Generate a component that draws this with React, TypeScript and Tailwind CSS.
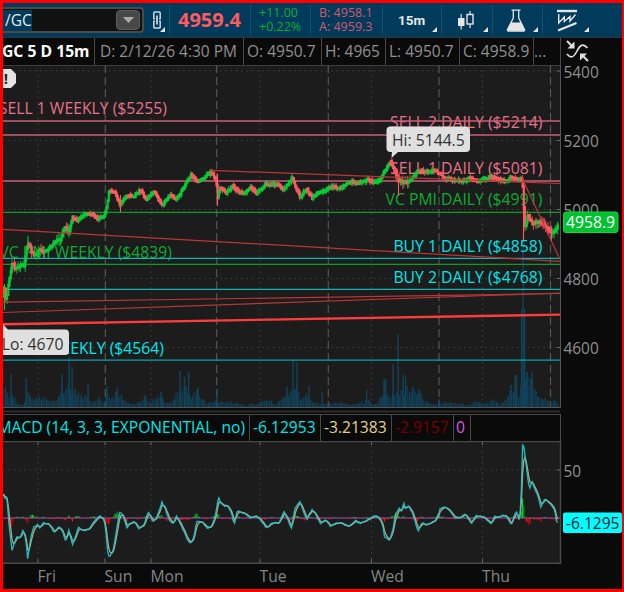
import type { ReactNode } from "react";

type Point = [number, number];

const PRICE: Point[] = [
  [3, 293], [4.5, 287], [6, 300], [8, 288], [10, 275], [12, 263], [15, 268], [20, 265], [24, 266], [27, 247],
  [29, 244], [32, 253], [35, 255], [40, 250], [45, 252], [50, 248], [55, 242], [60, 240], [63, 230], [66, 227],
  [69, 233], [72, 217], [77, 221], [82, 217], [87, 214], [93, 215], [99, 219], [104, 216], [107, 205], [109, 190],
  [115, 192], [120, 205], [123, 201], [127, 195], [133, 197], [140, 190], [146, 199], [154, 192], [162, 205], [170, 196],
  [177, 199], [183, 188], [191, 175], [198, 182], [203, 178], [211, 172], [215, 178], [216.5, 184], [217.5, 198], [220, 187],
  [226, 193], [233, 186], [240, 193], [246, 192], [251, 188], [257, 193], [262, 188], [266, 184], [280, 185], [283, 190],
  [287, 185], [292, 178], [297, 190], [300, 197], [307, 189], [312, 198], [318, 193], [325, 191], [330, 187], [337, 188],
  [343, 187], [350, 182], [360, 183], [367, 180], [373, 182], [380, 180], [385, 170], [391, 161], [395, 173], [400, 181],
  [408, 183], [413, 178], [419, 170], [424, 172], [434, 171], [440, 173], [444, 178], [454, 180], [464, 181], [471, 178],
  [477, 181], [491, 177], [501, 180], [507, 181], [511, 177], [517, 180], [522, 178], [523.5, 203], [525, 227], [528, 215],
  [532, 223], [541, 222], [546, 228], [551, 232], [554, 232], [559, 223],
];

const VOLUME: Point[] = [
  [3, 20], [5, 20], [9, 12], [14, 11], [18, 3], [23, 3], [27, 20], [31, 11], [36, 9], [40, 12], [46, 8], [52, 6], [57, 7], [60, 17],
  [64, 20], [67, 22], [72, 21], [77, 15], [84, 12], [92, 6], [98, 11], [104, 4], [106, 20], [110, 11], [114, 17], [119, 15],
  [124, 7], [133, 3], [140, 7], [145, 9], [150, 6], [161, 12], [166, 4], [172, 7], [177, 15], [182, 21], [187, 20], [191, 13],
  [197, 17], [202, 8], [208, 4], [214, 8], [220, 5], [228, 6], [235, 5], [247, 1], [251, 5], [255, 2], [262, 8], [269, 8],
  [274, 3], [280, 7], [285, 14], [290, 18], [296, 22], [300, 10], [306, 14], [312, 6], [319, 3], [330, 4], [340, 5], [350, 3],
  [358, 5], [364, 5], [367, 12], [371, 3], [377, 5], [382, 13], [387, 12], [393, 15], [401, 18], [406, 20], [413, 16], [420, 15],
  [424, 6], [434, 3], [446, 5], [460, 4], [468, 2], [476, 7], [484, 4], [494, 8], [498, 3], [505, 9], [510, 18], [514, 20],
  [519, 12], [523, 40], [527, 32], [532, 26], [537, 11], [543, 9], [550, 5], [554, 7], [558, 3],
];

const SPIKES: Point[] = [
  [11, 33], [26, 29], [62, 33], [69, 50], [72, 40], [88, 23], [107, 21], [117, 19], [145, 12], [161, 15], [180, 36],
  [184.5, 30], [188.5, 35], [198, 19], [217, 18], [287, 20], [293, 46], [297, 44], [309, 21], [322, 15], [366.5, 17],
  [384, 28], [385.5, 28], [393, 43], [398, 73], [403, 32], [405.5, 30], [412.5, 20], [419, 18], [439, 8], [511, 22],
  [515, 32], [516.5, 32], [521.5, 98], [523, 170], [524.5, 98], [527, 35], [532, 35],
];

const MACD: Point[] = [
  [3, 483], [4, 505], [5, 495], [7.3, 500], [9.3, 527], [12, 550.5], [16.7, 537], [20.7, 536.5], [23.3, 530], [26, 540],
  [27.7, 559], [30.7, 538], [33.3, 528], [37.7, 524], [40, 528], [43.3, 523], [50, 525], [54, 532.5], [59.3, 527],
  [62.7, 532], [65.7, 542], [68.7, 530], [72.7, 545], [78.3, 527.5], [83.3, 530.5], [89.3, 529], [95, 520], [100, 516],
  [104, 520], [106, 530], [107.3, 550], [109.3, 557.5], [113.3, 550], [116.7, 530], [119.3, 512.5], [122.7, 514],
  [126.7, 527.5], [130, 523.5], [135, 521.5], [139, 529], [144, 525], [148.3, 511], [152.7, 521.5], [156.7, 518],
  [162, 502], [165, 508], [169.3, 520.5], [173.3, 523], [176.7, 516], [181.7, 526.5], [186.7, 538], [190.7, 544],
  [194, 536.5], [196.7, 521.5], [201.7, 521.5], [207.3, 528.5], [211.7, 526.5], [215, 517], [216.7, 508], [218.3, 497],
  [220, 501.5], [224, 506], [228.3, 506.5], [231.7, 513], [234.3, 524.5], [237.3, 511], [243.3, 513], [247.3, 515],
  [250.7, 518], [256.7, 516], [261.7, 521.5], [266.7, 528], [271.7, 523], [279.3, 522.5], [284, 511.5], [287.3, 518],
  [291.3, 529], [295, 508], [300, 502], [304, 513], [306.7, 520], [312, 509], [316, 515], [320.3, 523.5], [325.3, 520],
  [330.3, 526], [337, 522.5], [342, 523.5], [349.3, 526.5], [355.3, 520.5], [360.3, 523.5], [367, 520], [373.7, 516],
  [378.7, 517], [382.7, 525], [384.7, 537], [389.3, 540.5], [392.7, 531], [395.3, 515], [399.3, 508], [402, 511],
  [403.7, 502], [405.3, 508.5], [408.7, 506.5], [412.7, 513], [418, 532], [422, 522.5], [427, 525], [436, 520],
  [440.3, 509], [444.7, 506.5], [449.3, 510], [454.7, 518], [460.3, 517.5], [465.3, 514], [471.3, 523.5], [476, 515.5],
  [483.7, 517], [491.3, 523.5], [494.7, 516.5], [500.3, 516.5], [506, 515], [511.3, 524.5], [516, 511], [519.3, 520],
  [521, 505], [522.4, 446], [523.6, 445], [526, 463], [529.3, 489], [532, 481.5], [535.3, 490], [538.7, 498], [540.7, 507.5],
  [544.7, 499], [549.3, 503], [554.7, 509], [556.3, 520], [558.3, 523],
];

const STEP = 1.21;
const COUNT = 459;

function valueAt(points: Point[], x: number) {
  for (let i = 1; i < points.length; i++) {
    const [x1, y1] = points[i];
    if (x <= x1) {
      const [x0, y0] = points[i - 1];
      return y0 + ((x - x0) / (x1 - x0)) * (y1 - y0);
    }
  }
  return points[points.length - 1][1];
}

// repeatable jitter in 0..1
function jitter(n: number) {
  const v = Math.sin(n * 127.1 + 11.7) * 43758.5453;
  return v - Math.floor(v);
}

const xs = Array.from({ length: COUNT }, (_, i) => 3.5 + i * STEP);

const candles = xs.map((x, i) => {
  const drift = valueAt(PRICE, x + 1.5) - valueAt(PRICE, x - 1.5);
  const open = valueAt(PRICE, x - STEP) + (jitter(i) - 0.5) * 2.6;
  const close = valueAt(PRICE, x) + (jitter(i + 1) - 0.5) * 2.6;
  const wild = x < 75 ? 6 : x > 395 && x < 412 ? 6 : x > 522 ? 6 : 3.2;
  return {
    x,
    up: Math.abs(drift) > 0.8 ? drift < 0 : close <= open,
    top: Math.min(open, close),
    bottom: Math.max(open, close),
    high: Math.min(open, close) - jitter(i + 300) * wild,
    low: Math.max(open, close) + jitter(i + 700) * wild,
  };
});

const volumeBars = xs.map((x, i) => valueAt(VOLUME, x) * (0.6 + jitter(i + 50) * 0.5));

const macdValues = xs.map((x, i) => valueAt(MACD, x) + (jitter(i + 90) - 0.5) * 1.2);

const signalValues: number[] = [];
macdValues.forEach((v, i) => {
  const prev = i ? signalValues[i - 1] : v;
  signalValues.push(prev + (v - prev) * 0.5);
});

const toPath = (ys: number[]) =>
  ys.map((y, i) => `${i ? "L" : "M"}${xs[i].toFixed(1)} ${y.toFixed(1)}`).join("");

const LEVELS = [
  { y: 121, color: "#c95f78" },
  { y: 135, color: "#c95f78" },
  { y: 181, color: "#c95f78" },
  { y: 212.3, color: "#0c9a2c" },
  { y: 264.3, color: "#0c9a2c" },
  { y: 258.3, color: "#08b4b8" },
  { y: 289.3, color: "#08b4b8" },
  { y: 360.2, color: "#08a5a8" },
];

const LEVEL_LABELS = [
  { text: "SELL 1 WEEKLY ($5255)", x: 167, y: 114.3, color: "#e8718b" },
  { text: "VC PMI WEEKLY ($4839)", x: 172, y: 257.7, color: "#0cab30" },
  { text: "BUY 1 WEEKLY ($4564)", x: 164, y: 353.7, color: "#00e5e8" },
  { text: "SELL 2 DAILY ($5214)", x: 542.3, y: 128.4, color: "#e8718b" },
  { text: "SELL 1 DAILY ($5081)", x: 542.3, y: 174.4, color: "#e8718b" },
  { text: "VC PMI DAILY ($4991)", x: 542.3, y: 205.4, color: "#0cab30" },
  { text: "BUY 1 DAILY ($4858)", x: 542.3, y: 251.5, color: "#00e5e8" },
  { text: "BUY 2 DAILY ($4768)", x: 542.3, y: 282.5, color: "#00e5e8" },
];

const PRICE_TICKS = [
  { label: "5400", y: 71 },
  { label: "5200", y: 140.5 },
  { label: "5000", y: 209.5 },
  { label: "4800", y: 278.5 },
  { label: "4600", y: 347.5 },
];

const DAYS = [
  { label: "Fri", x: 38 },
  { label: "Sun", x: 105 },
  { label: "Mon", x: 151 },
  { label: "Tue", x: 260 },
  { label: "Wed", x: 371.5 },
  { label: "Thu", x: 482.5 },
];

const SESSION_BREAKS = [105.3, 216.7, 328.3, 439, 550.5];

function Corner() {
  return (
    <svg className="absolute right-1 bottom-[5px] h-[5px] w-[5px]" viewBox="0 0 5 5">
      <path d="M5 0V5H0Z" fill="#e6e6e6" />
    </svg>
  );
}

function ToolButton({ className, children }: { className: string; children: ReactNode }) {
  return (
    <div className={`relative flex h-full shrink-0 items-center ${className}`}>
      {children}
      <Corner />
    </div>
  );
}

function Divider() {
  return <div className="h-[30px] w-px shrink-0 bg-[#17506f]" />;
}

function Toolbar() {
  return (
    <div className="flex h-[34px] items-center bg-[#003b5c]">
      <div className="flex h-[26px] w-[141px] shrink-0 items-center justify-between rounded-r-sm border-y-2 border-r-2 border-[#4a4a4a] bg-[#111] pr-0.5">
        <span className="h-[21px] bg-[#003b5c] pl-0.5 text-[15.5px] leading-[21px] text-[#e8e8e8]">/GC</span>
        <div className="flex h-5 w-6 items-center justify-center rounded-sm border border-[#5c5c5c] bg-[#484848]">
          <svg className="h-[6px] w-[11px]" viewBox="0 0 11 6">
            <path d="M0 0H11L5.5 6Z" fill="#aaa" />
          </svg>
        </div>
      </div>

      <ToolButton className="w-[25px] pl-2">
        <svg className="h-[18px] w-[10px]" viewBox="0 0 10 18" fill="none" stroke="#ccd6dc" strokeWidth="1.5">
          <path d="M3 7.700H1.800V1.800Q1.800 1 2.600 1H7.400Q8.200 1 8.200 1.800V7.700H7" />
          <path d="M3 10.300H1.800V16.200Q1.800 17 2.600 17H7.400Q8.200 17 8.200 16.200V10.300H7" />
          <path d="M5 4.500V13.500" strokeWidth="1.800" />
        </svg>
      </ToolButton>
      <Divider />

      <div className="w-[80px] shrink-0 pl-2 text-[20px] font-bold text-[#ff5a60]">4959.4</div>
      <Divider />
      <div className="w-[59px] shrink-0 pl-2 text-[12.5px] leading-[14px] text-[#0cab30]">
        <div>+11.00</div>
        <div>+0.22%</div>
      </div>
      <Divider />
      <div className="w-[71px] shrink-0 pl-2 text-[12.5px] leading-[14px] whitespace-nowrap text-[#d9566a]">
        <div>B: 4958.1</div>
        <div>A: 4959.3</div>
      </div>
      <Divider />

      <ToolButton className="w-[58px] pl-[15px]">
        <span className="font-[Roboto,sans-serif] text-[13.5px] font-bold text-[#e6e6e6]">15m</span>
      </ToolButton>
      <Divider />
      <ToolButton className="w-[50px] pl-[15px]">
        <svg className="h-5 w-[18px]" viewBox="0 0 18 20">
          <path d="M4.2 4V19.500M13 1V18" stroke="#e6e6e6" strokeWidth="1.2" />
          <rect x="1" y="8" width="6.5" height="8" fill="#e6e6e6" />
          <rect x="10" y="4.500" width="6" height="9.5" fill="#003b5c" stroke="#e6e6e6" strokeWidth="1.4" />
        </svg>
      </ToolButton>
      <Divider />
      <ToolButton className="w-[49px] pl-[13px]">
        <svg className="h-[23px] w-[20px]" viewBox="0 0 20 23" fill="none" stroke="#e6e6e6" strokeWidth="1.3">
          <path d="M5.500 1.200H14.500M7.300 1V9L1.500 20.500Q1 22 2.500 22H17.500Q19 22 18.500 20.500L12.700 9V1" />
          <path d="M5.3 13.500H14.700L19 21.800H1Z" fill="#e6e6e6" stroke="none" />
        </svg>
      </ToolButton>
      <Divider />
      <ToolButton className="w-[50px] pl-[14px]">
        <svg className="h-[23px] w-[20px]" viewBox="0 0 20 23" fill="none" stroke="#e6e6e6">
          <path d="M0 2H20" strokeWidth="2.400" />
          <path d="M1.700 5V14L7.300 8V12.500L13 7.500V12L18.500 5.500" strokeWidth="1.400" />
          <path d="M1 21.500L19.500 14" strokeWidth="2.200" />
        </svg>
      </ToolButton>
    </div>
  );
}

function Cell({ className, children }: { className: string; children?: ReactNode }) {
  return (
    <div className={`flex h-full shrink-0 items-center overflow-hidden border-r border-[#484848] whitespace-nowrap ${className}`}>
      {children}
    </div>
  );
}

function QuoteRow() {
  return (
    <div className="flex h-[28px] border-t border-[#333] bg-[#0a0a0a] text-[15.5px] text-[#909090]">
      <Cell className="w-[92px] text-[15.7px] font-bold text-white">
        <span className="-ml-px">GC 5 D 15m</span>
      </Cell>
      <Cell className="w-[149px] pl-[5px]">D: 2/12/26 4:30 PM</Cell>
      <Cell className="w-[78px] pl-[3px]">O: 4950.7</Cell>
      <Cell className="w-[64px] pl-[3px]">H: 4965</Cell>
      <Cell className="w-[74px] pl-[3px]">L: 4950.7</Cell>
      <Cell className="w-[74px] pl-[3px]">C: 4958.9</Cell>
      <Cell className="w-[27px]">...</Cell>
      <svg className="mt-0.5 ml-[5px] h-[22px] w-[23px]" viewBox="0 0 23 22" fill="none" stroke="#e0e0e0">
        <path d="M1 14C5 19 8 17 11 11S17 3 21.500 8" strokeWidth="1.600" />
        <path d="M1 1L6 6" strokeWidth="2" />
        <path d="M8.500 1.500V8.500H1.500Z" fill="#e0e0e0" stroke="none" />
        <path d="M22 21L17 16" strokeWidth="2" />
        <path d="M14 13.500H21L14 20.500Z" fill="#e0e0e0" stroke="none" />
      </svg>
    </div>
  );
}

function PriceChart() {
  return (
    <svg className="block h-[349px] w-[619px]" viewBox="3 65 619 349">
      <rect x="3" y="65" width="619" height="349" fill="#0a0a0a" />
      <rect x="3" y="65" width="557" height="342" fill="#1c1c1c" />

      <g stroke="#454545" fill="none">
        {PRICE_TICKS.map((t) => (
          <path key={t.label} d={`M3 ${t.y}H560`} strokeDasharray="1.300 4" />
        ))}
        {DAYS.filter((d) => d.label !== "Sun").map((d) => (
          <path key={d.label} d={`M${d.x} 65V407`} strokeDasharray="1.300 4" />
        ))}
        {SESSION_BREAKS.map((x) => (
          <path key={x} d={`M${x} 65V407`} stroke="#555" strokeWidth="1.200" strokeDasharray="8 4" />
        ))}
      </g>

      <g fill="#104b68" opacity="0.85">
        {volumeBars.map((h, i) => (
          <rect key={i} x={xs[i]} y={407 - h} width={i % 2 ? 1.1 : 0.7} height={h} />
        ))}
        {SPIKES.map(([x, h]) => (
          <rect key={x} x={x - 0.6} y={407 - h} width="1.400" height={h} />
        ))}
      </g>

      {LEVEL_LABELS.map((l) => (
        <text key={l.text} x={l.x} y={l.y} fill={l.color} fontSize="15.75" textAnchor="end">
          {l.text}
        </text>
      ))}

      {LEVELS.map((l) => (
        <path key={l.y} d={`M3 ${l.y}H560`} stroke={l.color} strokeWidth="1.300" />
      ))}

      {candles.map((c) => (
        <g key={c.x} fill={c.up ? "#0acb36" : "#ff5a60"}>
          <rect x={c.x - 0.5} y={c.high - 0.5} width="1" height={c.low - c.high + 1} opacity="0.850" />
          <rect x={c.x - 1.1} y={c.top - 1.5} width="2.200" height={c.bottom - c.top + 3} />
        </g>
      ))}
      <g strokeWidth="1.100">
        <path d="M28 236V250M4.500 284V310M292 173V182" stroke="#0acb36" />
        <path d="M217.500 174V206M398.500 175V196M523.500 180V240M551.500 228V241M120.500 195V212" stroke="#ff5a60" />
      </g>

      <g stroke="#b93737" strokeWidth="1.200" fill="none">
        <path d="M3 229.300L560 261.300" />
        <path d="M210 170.300L560 183.500" />
        <path d="M522 178L560 259.500" />
        <path d="M3 302.200L560 293.500" />
        <path d="M3 312.500L560 293" />
      </g>
      <path d="M3 324.200L560 314.600" stroke="#ff3c3c" strokeWidth="2.400" />

      <path d="M3 69H11L16 74V83L11 88H3Z" fill="#e4e4e4" />
      <text x="6" y="84" fontSize="15" fontWeight="700" textAnchor="middle" fill="#222">!</text>

      <path d="M391.500 158L392 151H399Z" fill="#e0e0e0" />
      <rect x="386.500" y="126.500" width="83.500" height="25.500" rx="4" fill="#e0e0e0" />
      <text x="392" y="146" fontSize="15.700" fill="#333">Hi: 5144.5</text>

      <path d="M3 324L9 331H3Z" fill="#e0e0e0" />
      <path d="M3 329.500H65Q69 329.500 69 333.500V351Q69 355 65 355H3Z" fill="#e0e0e0" />
      <text x="63.500" y="349.500" fontSize="15.700" fill="#333" textAnchor="end">Lo: 4670</text>

      <path d="M560.500 65V407.500H3" fill="none" stroke="#555" />
      <path d="M3 65.300H560" stroke="#484848" />
      <path d="M3 411.500H560" stroke="#2c2c2c" strokeWidth="2" />

      {PRICE_TICKS.map((t) => (
        <g key={t.label}>
          <path d={`M557 ${t.y}H560`} stroke="#666" />
          <text x="563.500" y={t.y + 6.6} fontSize="15.400" fill="#909090">{t.label}</text>
        </g>
      ))}
      <rect x="563.500" y="212" width="54.500" height="20.500" rx="2.500" fill="#00c12f" stroke="#18d447" />
      <text x="566" y="228.300" fontSize="15.700" fill="#fff">4958.9</text>
    </svg>
  );
}

function StudyRow() {
  return (
    <div className="flex h-[27px] w-[558px] border-t border-r border-[#484848] bg-[#0a0a0a] text-[15.6px]">
      <Cell className="w-[247px] justify-end pr-1 text-[#00e5e8]">MACD (14, 3, 3, EXPONENTIAL, no)</Cell>
      <Cell className="w-[71px] pl-[3px] text-[#00e5e8]">-6.12953</Cell>
      <Cell className="w-[71px] pl-[3px] text-[#e3d28d]">-3.21383</Cell>
      <Cell className="w-[62px] pl-[3px] text-[#760000]">-2.9157</Cell>
      <Cell className="w-[17px] pl-[2px] text-[#d957e0]">0</Cell>
    </div>
  );
}

function MacdChart() {
  return (
    <svg className="block h-[148px] w-[619px]" viewBox="3 441 619 148">
      <rect x="3" y="441" width="557" height="122" fill="#1c1c1c" />
      <g stroke="#454545">
        <path d="M3 470H560" strokeDasharray="1.300 4" />
        {DAYS.map((d) => (
          <path key={d.label} d={`M${d.x} 441V563`} strokeDasharray="1.300 4" />
        ))}
        {DAYS.map((d) => (
          <path key={d.label} d={`M${d.x} 441V445M${d.x} 559V563`} stroke="#666" />
        ))}
      </g>

      {xs.map((x, i) => {
        const diff = signalValues[i] - macdValues[i];
        const h = Math.min(Math.abs(diff) * (0.5 + jitter(i + 20) * 0.5), 27);
        return (
          <rect
            key={x}
            x={x - 0.5}
            y={diff > 0 ? 518 - h : 518}
            width="1.100"
            height={h}
            fill={diff > 0 ? (i % 3 ? "#0b9c16" : "#00ee18") : i % 3 ? "#b80808" : "#ff1010"}
          />
        );
      })}
      <path d="M3 518H560" stroke="#a04ea6" strokeWidth="1.100" />
      <path d={toPath(signalValues)} fill="none" stroke="#b9a585" strokeWidth="1.300" />
      <path d={toPath(macdValues)} fill="none" stroke="#25c8cb" strokeWidth="1.400" opacity="0.900" />

      <path d="M3 441.500H560.500V563.300H3" fill="none" stroke="#484848" strokeWidth="1.400" />
      <path d="M557 470H560" stroke="#666" />
      <text x="563.500" y="476.500" fontSize="15.400" fill="#909090">50</text>
      <rect x="563" y="512.500" width="59" height="20.500" rx="2" fill="#00ffff" />
      <text x="566" y="528.800" fontSize="15.500" fill="#123">-6.1295</text>

      {DAYS.map((d) => (
        <text key={d.label} x={d.x - 0.5} y="582" fontSize="15.700" fill="#858585">
          {d.label}
        </text>
      ))}
    </svg>
  );
}

export default function App() {
  return (
    <div className="h-[592px] w-[624px] overflow-hidden border-[3px] border-r-2 border-[#ff0000] bg-[#0a0a0a] font-['Open_Sans','Noto_Sans',sans-serif]">
      <Toolbar />
      <QuoteRow />
      <PriceChart />
      <StudyRow />
      <MacdChart />
    </div>
  );
}
